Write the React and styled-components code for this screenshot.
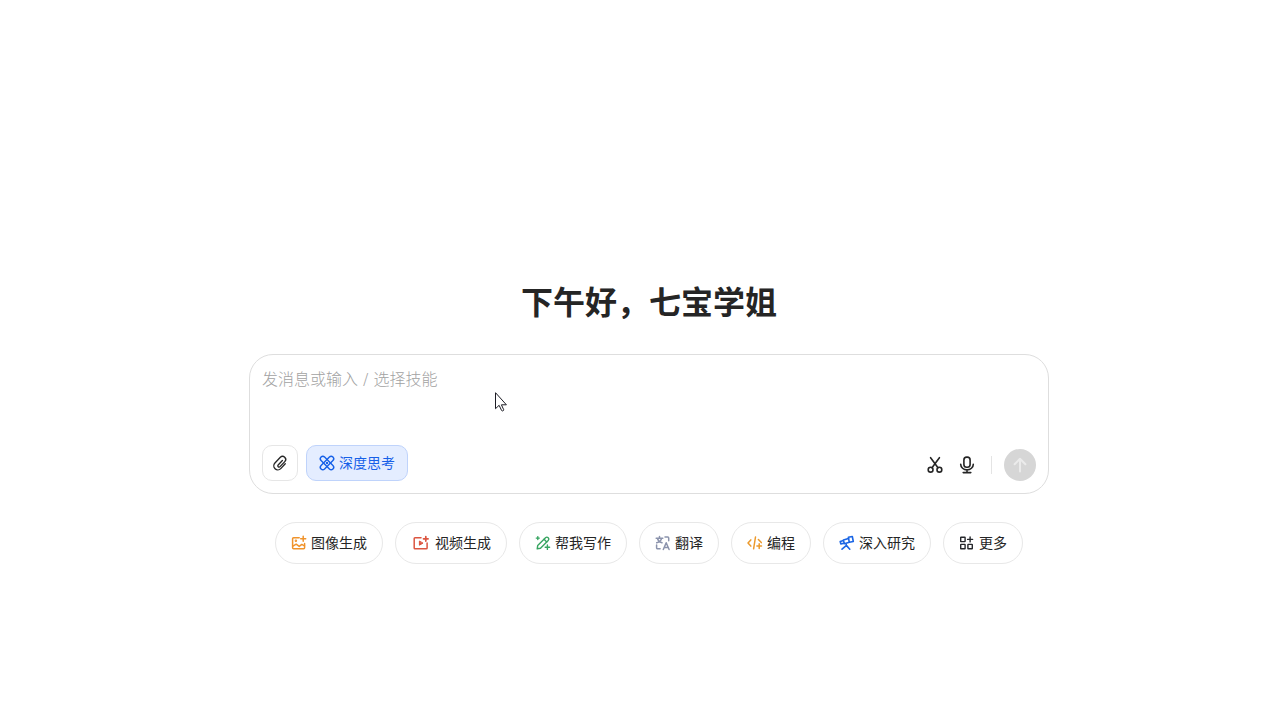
import React from 'react'
import styled, { createGlobalStyle } from 'styled-components'

const ImageIcon = () => (
    <Icon viewBox="0 0 16 16" $color="#f0932b" $stroke={1.5} aria-hidden="true">
        <path d="M8.2 2.7H2.6a1 1 0 0 0-1 1v9.1a1 1 0 0 0 1 1h10a1 1 0 0 0 1-1V8.4" />
        <path d="M1.9 11.2l3.3-2 3 2.2 2.6-2 2.7 1.4" />
        <circle cx="4.9" cy="5.8" r=".5" />
        <path d="M12.2 1.2v5M9.7 3.7h5" />
    </Icon>
)

const VideoIcon = () => (
    <Icon viewBox="0 0 20 16" $width={20} $color="#dc5540" $stroke={1.5} aria-hidden="true">
        <path d="M10 2.7H4a.8.8 0 0 0-.8.8v9.5a.8.8 0 0 0 .8.8h11.3a.8.8 0 0 0 .8-.8V8" />
        <path d="M8.4 6.4v3.8l3.3-1.9z" fill="currentColor" strokeWidth="1" />
        <path d="M14.8 1.5v4.6M12.5 3.8h4.6" strokeWidth="1.7" />
    </Icon>
)

const WriteIcon = () => (
    <Icon viewBox="0 0 16 16" $color="#37a561" $stroke={1.4} aria-hidden="true">
        <path d="M2.2 13.8l.5-3.3 7.8-7.7a1.9 1.9 0 0 1 2.7 2.7l-7.7 7.8z" />
        <path d="M9.1 4.3l2.6 2.6" />
        <path d="M2.8 1.6v3M1.3 3.1h3M12.4 10v4.4M10.2 12.2h4.4" />
    </Icon>
)

const TranslateIcon = () => (
    <Icon viewBox="0 0 16 16" $color="#8b93ac" $stroke={1.5} aria-hidden="true">
        <path d="M1.2 3.2h6.6M4.5 1.5v1.7M2.4 3.4c.5 2.1 2 3.6 4.6 4.4M6.6 3.4c-.5 2.1-2 3.6-4.9 4.4" />
        <path d="M10 2.1h2.7a1 1 0 0 1 1 1v2.7M1.6 10v2.7a1 1 0 0 0 1 1h2.5" />
        <path d="M8.3 14.5l2.9-6.8 2.9 6.8M9.3 12.4h3.8" />
    </Icon>
)

const CodeIcon = () => (
    <Icon viewBox="0 0 16 16" $color="#ec9a2d" $stroke={1.5} aria-hidden="true">
        <path d="M3.8 4.9L1 8l2.8 3.1M8.5 2L6.6 13.8M11.4 4.6L14.3 7.6" />
        <path d="M12.2 8.8v4.6M9.9 11.1h4.6" />
    </Icon>
)

const TelescopeIcon = () => (
    <Icon viewBox="0 0 16 16" $color="#1b66e5" $stroke={1.6} aria-hidden="true">
        <path d="M9.4 2.3l3.9-.8 1 5-4 .8z" />
        <path d="M9.5 3.5L4.4 5.1l.9 3.7 5-1.5M4.4 5.6l-3.2.9.6 2.4 3.3-.7" />
        <path d="M7.2 9.2v1.4L3 14.2M7.6 10.6l3.2 3.6" />
    </Icon>
)

const MoreIcon = () => (
    <Icon viewBox="0 0 16 16" $color="#25272b" $stroke={1.4} aria-hidden="true">
        <rect x="1.7" y="2.2" width="4.4" height="4.4" rx=".4" />
        <rect x="1.7" y="9.4" width="4.4" height="4.4" rx=".4" />
        <rect x="8.9" y="9.4" width="4.4" height="4.4" rx=".4" />
        <path d="M11.1 1.9v5M8.6 4.4h5" />
    </Icon>
)

const ClipIcon = () => (
    <Icon viewBox="0 0 24 24" $stroke={2} aria-hidden="true">
        <path d="M15.6 8.2l-6.4 6.7a1.9 1.9 0 0 0 2.8 2.6l7.2-7.6a4.6 4.6 0 0 0-6.7-6.4l-8.1 8.6a6 6 0 0 0 8.7 8.3l6.8-7.2" />
    </Icon>
)

const AtomIcon = () => (
    <Icon viewBox="0 0 16 16" $stroke={1.4} aria-hidden="true">
        <rect x="-.4" y="5.5" width="16.8" height="5" rx="2.5" transform="rotate(45 8 8)" />
        <rect x="-.4" y="5.5" width="16.8" height="5" rx="2.5" transform="rotate(-45 8 8)" />
        <circle cx="8" cy="8" r=".5" fill="currentColor" />
    </Icon>
)

const ScissorsIcon = () => (
    <Icon viewBox="0 0 16 16" $stroke={1.6} aria-hidden="true">
        <circle cx="3.6" cy="12.7" r="2.4" />
        <circle cx="12.4" cy="12.7" r="2.4" />
        <path d="M3.6 .7l7.4 10M12.4 .7L5 10.7" />
    </Icon>
)

const MicIcon = () => (
    <Icon viewBox="0 0 16 16" $stroke={1.6} aria-hidden="true">
        <rect x="4.9" y=".1" width="6.2" height="10.2" rx="2.8" />
        <path d="M1.7 7.3a6.3 5.6 0 0 0 12.6 0M8 12.9v2.5M4.2 15.6h7.6" />
    </Icon>
)

const ArrowIcon = () => (
    <Icon viewBox="0 0 16 16" $stroke={2} aria-hidden="true">
        <path d="M8 14.6V1.8M2.6 7.2L8 1.8l5.4 5.4" />
    </Icon>
)

const skills = [
    { label: '图像生成', icon: ImageIcon },
    { label: '视频生成', icon: VideoIcon },
    { label: '帮我写作', icon: WriteIcon },
    { label: '翻译', icon: TranslateIcon },
    { label: '编程', icon: CodeIcon },
    { label: '深入研究', icon: TelescopeIcon },
    { label: '更多', icon: MoreIcon },
]

const App = () => {
    return (
        <>
            <GlobalStyle />
            <Page>
                <Greeting>下午好，七宝学姐</Greeting>
                <Composer>
                    <Message aria-label="发消息" placeholder="发消息或输入 / 选择技能" />
                    <Toolbar>
                        <Tools>
                            <AttachButton type="button" aria-label="附件"><ClipIcon /></AttachButton>
                            <ThinkButton type="button" aria-pressed="true"><AtomIcon />深度思考</ThinkButton>
                        </Tools>
                        <Actions>
                            <IconButton type="button" aria-label="截图"><ScissorsIcon /></IconButton>
                            <IconButton type="button" aria-label="语音"><MicIcon /></IconButton>
                            <Divider />
                            <SendButton type="submit" aria-label="发送" disabled><ArrowIcon /></SendButton>
                        </Actions>
                    </Toolbar>
                    <Pointer viewBox="0 0 14 22" aria-hidden="true">
                        <path d="M.5 .7v16l3.6-3.4 2.5 5.2c.7.9 2.3.3 2.1-.8l-2.3-4.9h5z" />
                    </Pointer>
                </Composer>
                <Skills>
                    {skills.map(({ label, icon: SkillIcon }) => (
                        <Chip type="button" key={label}>
                            <SkillIcon />
                            {label}
                        </Chip>
                    ))}
                </Skills>
            </Page>
        </>
    )
}

const GlobalStyle = createGlobalStyle`
    * {
        box-sizing: border-box;
    }

    body {
        margin: 0;
        background: #fff;
        color: #252525;
    }

    body, button {
        font-family: 'Noto Sans', 'Noto Sans CJK SC', sans-serif;
    }
`

const Page = styled.main`
    display: flex;
    flex-direction: column;
    align-items: center;
    min-height: 100vh;
    padding: 282px 16px 32px 34px;
`

const Greeting = styled.h1`
    margin: 0 0 32px;
    font-size: 32px;
    line-height: 40px;
    font-weight: 700;
`

const Composer = styled.form`
    position: relative;
    width: 100%;
    max-width: 800px;
    padding: 12px;
    border: 1px solid #dedede;
    border-radius: 24px;
    background: #fff;
`

const Message = styled.textarea`
    display: block;
    width: 100%;
    height: 78px;
    padding: 0;
    border: 0;
    outline: 0;
    resize: none;
    background: transparent;
    color: inherit;
    font-family: 'DejaVu Sans', 'Noto Sans CJK SC', sans-serif;
    font-size: 16px;
    font-weight: 300;
    line-height: 26px;

    &::placeholder {
        color: #a2a2a2;
        opacity: 1;
    }
`

const Toolbar = styled.div`
    display: flex;
    align-items: flex-end;
    justify-content: space-between;
`

const Tools = styled.div`
    display: flex;
    gap: 8px;
`

const Actions = styled.div`
    display: flex;
    align-items: center;
`

const Button = styled.button`
    display: inline-flex;
    align-items: center;
    justify-content: center;
    gap: 4px;
    padding: 0;
    border: 0;
    background: transparent;
    color: #252525;
    font-size: 14px;
    line-height: 20px;
    white-space: nowrap;
    cursor: pointer;
`

const AttachButton = styled(Button)`
    width: 36px;
    height: 36px;
    border: 1px solid #e6e6e6;
    border-radius: 10px;
`

const ThinkButton = styled(Button)`
    height: 36px;
    padding: 0 12px;
    border: 1px solid #bfd3fb;
    border-radius: 10px;
    background: #e4edff;
    color: #1660e8;
`

const IconButton = styled(Button)`
    width: 32px;
    height: 32px;
`

const Divider = styled.span`
    width: 1px;
    height: 18px;
    margin: 0 12px 0 8px;
    background: #e4e4e4;
`

const SendButton = styled(Button)`
    width: 32px;
    height: 32px;
    border-radius: 50%;
    background: #d6d6d6;
    color: #ebebeb;
    cursor: default;
`

const Skills = styled.div`
    display: flex;
    flex-wrap: wrap;
    justify-content: center;
    gap: 12px;
    margin-top: 28px;
`

const Chip = styled(Button)`
    height: 42px;
    padding: 0 15px;
    border: 1px solid #e8e8e8;
    border-radius: 21px;
`

const Icon = styled.svg`
    flex: none;
    width: ${({ $width }) => $width || 16}px;
    height: 16px;
    overflow: visible;
    fill: none;
    stroke: currentColor;
    stroke-width: ${({ $stroke }) => $stroke || 1.3};
    stroke-linecap: round;
    stroke-linejoin: round;
    color: ${({ $color }) => $color || 'inherit'};
`

// mouse pointer resting over the message box
const Pointer = styled.svg`
    position: absolute;
    top: 37px;
    left: 245px;
    width: 14px;
    height: 22px;
    fill: #fff;
    stroke: #1c1c24;
    stroke-width: 1;
    pointer-events: none;
`

export default App
